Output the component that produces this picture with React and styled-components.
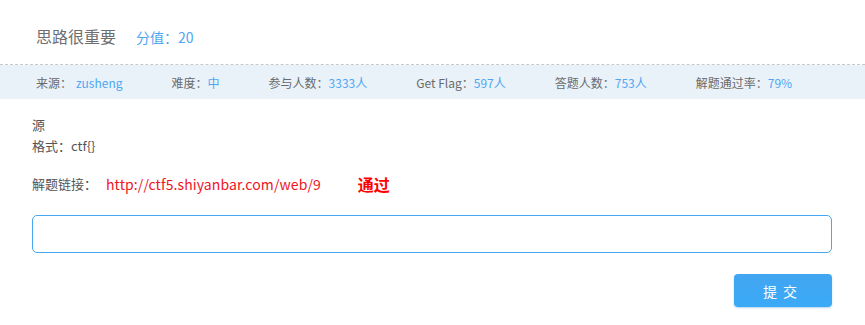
import React, { useState } from "react";
import styled, { createGlobalStyle } from "styled-components";

const GlobalStyle = createGlobalStyle`
  html, body {
    margin: 0;
    padding: 0;
    background: #fff;
  }
  body {
    font-family: "Noto Sans CJK SC", "Noto Sans", sans-serif;
  }
`;

const Page = styled.div`
  width: 865px;
  height: 325px;
  overflow: hidden;
  background: #fff;
`;

const Header = styled.div`
  display: flex;
  align-items: baseline;
  gap: 20px;
  height: 65px;
  box-sizing: border-box;
  padding: 24px 0 0 36px;
  border-bottom: 1px dashed #c8c8c8;
`;

const Title = styled.h3`
  margin: 0;
  font-size: 16px;
  font-weight: normal;
  color: #6e6e6e;
  line-height: 24px;
`;

const Score = styled.span`
  font-size: 14px;
  color: #4ea6f2;
`;

const StatsBar = styled.div`
  display: flex;
  align-items: center;
  gap: 49px;
  height: 34px;
  padding-left: 36px;
  background: #eaf2f9;
  font-size: 12px;
  color: #6a6a6a;
`;

const Stat = styled.span`
  white-space: nowrap;
`;

const Value = styled.span`
  color: #4ea6f2;
  margin-left: ${(p) => (p.$spaced ? "4px" : "0")};
`;

const Body = styled.div`
  padding: 15px 33px 0 32px;
  font-size: 13px;
  color: #555;
`;

const Line = styled.div`
  line-height: 21px;
`;

const LinkRow = styled.div`
  display: flex;
  align-items: center;
  margin-top: 16px;
  line-height: 24px;
`;

const Link = styled.a`
  color: #f0141e;
  text-decoration: none;
  margin-left: 9px;
  font-size: 14px;
  letter-spacing: 0.1px;
`;

const Pass = styled.span`
  color: #ff0000;
  font-weight: bold;
  font-size: 16px;
  margin-left: 37px;
`;

const Input = styled.input`
  display: block;
  box-sizing: border-box;
  width: 800px;
  height: 38px;
  margin-top: 19px;
  border: 1px solid #45a8f0;
  border-radius: 5px;
  outline: none;
  padding: 0 10px;
  font-size: 14px;
`;

const Actions = styled.div`
  display: flex;
  justify-content: flex-end;
  margin-top: 21px;
`;

const SubmitButton = styled.button`
  width: 98px;
  height: 33px;
  border: none;
  border-radius: 4px;
  background: linear-gradient(180deg, #42a5f0, #3aaaf7);
  box-shadow: 0 1px 2px rgba(40, 130, 210, 0.35);
  color: #fff;
  font-family: inherit;
  font-size: 14px;
  letter-spacing: 6px;
  cursor: pointer;
`;

function App() {
  const [flag, setFlag] = useState("");

  return (
    <Page>
      <GlobalStyle />
      <Header>
        <Title>思路很重要</Title>
        <Score>分值：20</Score>
      </Header>
      <StatsBar>
        <Stat>
          来源：<Value $spaced>zusheng</Value>
        </Stat>
        <Stat>
          难度：<Value>中</Value>
        </Stat>
        <Stat>
          参与人数：<Value>3333人</Value>
        </Stat>
        <Stat>
          Get Flag：<Value>597人</Value>
        </Stat>
        <Stat>
          答题人数：<Value>753人</Value>
        </Stat>
        <Stat>
          解题通过率：<Value>79%</Value>
        </Stat>
      </StatsBar>
      <Body>
        <Line>源</Line>
        <Line>格式：ctf{"{}"}</Line>
        <LinkRow>
          解题链接：
          <Link href="#">http://ctf5.shiyanbar.com/web/9</Link>
          <Pass>通过</Pass>
        </LinkRow>
        <Input value={flag} onChange={(e) => setFlag(e.target.value)} />
        <Actions>
          <SubmitButton>提交</SubmitButton>
        </Actions>
      </Body>
    </Page>
  );
}

export default App;
